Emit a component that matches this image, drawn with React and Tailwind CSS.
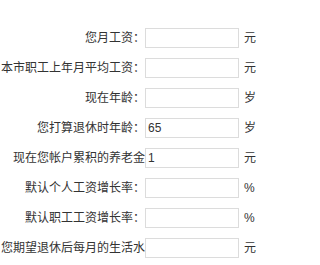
import React from "react";

const rows = [
  { label: "您月工资：", value: "", unit: "元" },
  { label: "本市职工上年月平均工资：", value: "", unit: "元" },
  { label: "现在年龄：", value: "", unit: "岁" },
  { label: "您打算退休时年龄：", value: "65", unit: "岁" },
  { label: "现在您帐户累积的养老金", value: "1", unit: "元" },
  { label: "默认个人工资增长率：", value: "", unit: "%" },
  { label: "默认职工工资增长率：", value: "", unit: "%" },
  { label: "您期望退休后每月的生活水", value: "", unit: "元" },
];

export default function App() {
  return (
    <div
      className="w-[270px] h-[265px] bg-white pt-[23px] text-[12px] text-[#333]"
      style={{ fontFamily: '"Liberation Sans", "Noto Sans CJK SC", sans-serif' }}
    >
      {rows.map((r, i) => (
        <div key={i} className="flex items-center h-[30px]">
          <label className="w-[145px] shrink-0 text-right whitespace-nowrap overflow-hidden leading-[20px]">
            {r.label}
          </label>
          <input
            type="text"
            defaultValue={r.value}
            className="w-[94px] h-[20px] border border-[#dcdcdc] bg-white px-[2px] text-[12px] text-[#333] outline-none"
          />
          <span className="ml-[5px] leading-[20px]">{r.unit}</span>
        </div>
      ))}
    </div>
  );
}
